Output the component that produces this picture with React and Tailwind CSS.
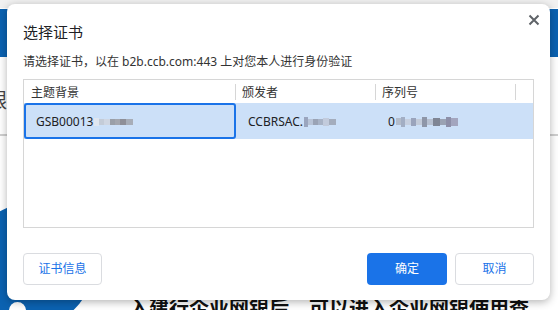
import React from "react";

const font = { fontFamily: '"Noto Sans", "Noto Sans CJK SC", sans-serif' };

// blurred bits of the serial / name, drawn as small pixel blocks
function Smudge({ blocks }) {
    return (
        <span className="inline-flex items-center ml-[1px]">
            {blocks.map((b, i) => (
                <span
                    key={i}
                    className="inline-block"
                    style={{ width: b[0], height: b[1], background: b[2] }}
                />
            ))}
        </span>
    );
}

export default function App() {
    return (
        <div className="relative w-[558px] h-[310px] overflow-hidden bg-white" style={font}>
            {/* page behind the dialog */}
            <div className="absolute inset-x-0 top-0 h-[8px] bg-[#f1f1f1]" />
            <div className="absolute inset-x-0 top-[9px] h-[48px] bg-[#0b62b1]" />
            <div className="absolute inset-x-0 top-[134px] h-[2px] bg-[#cfcfcf]" />
            <div className="absolute left-[-33px] top-[91px] text-[20px] text-[#444] leading-none">网银</div>
            <div className="absolute left-[-31px] top-[203px] w-[124px] h-[124px] rounded-full bg-[#0b62b1]" />
            <div className="absolute left-[9px] top-[302px] w-[17px] h-[17px] rounded-full bg-white" />
            <div className="absolute left-[129px] top-[299px] text-[20px] font-bold leading-none text-[#111] whitespace-nowrap">
                入建行企业网银后，可以进入企业网银使用查
            </div>

            {/* dialog */}
            <div className="absolute left-[7px] top-[4px] w-[543px] h-[296px] rounded-[8px] bg-white shadow-[0_2px_8px_rgba(0,0,0,0.3)] px-4 pt-4">
                <button className="absolute top-[10px] right-[10px] w-[12px] h-[12px] text-[#5f6368]">
                    <svg viewBox="0 0 12 12" width="12" height="12">
                        <path d="M1.5 1.5 L10.5 10.5 M10.5 1.5 L1.5 10.5" stroke="currentColor" strokeWidth="2" />
                    </svg>
                </button>

                <div className="h-[24px] leading-[24px] text-[15px] text-[#202124]">选择证书</div>
                <div className="mt-[8px] h-[20px] leading-[20px] text-[12px] text-[#333]">
                    请选择证书，以在 b2b.ccb.com:443 上对您本人进行身份验证
                </div>

                <div className="mt-[7px] w-[511px] h-[149px] border border-[#d6d6d6]">
                    <div className="flex h-[23px] items-center text-[12px] text-[#333]">
                        <div className="w-[211px] pl-[7px] pt-[3px]">主题背景</div>
                        <div className="w-[1px] h-[16px] bg-[#d6d6d6]" />
                        <div className="w-[139px] pl-[6px] pt-[3px]">颁发者</div>
                        <div className="w-[1px] h-[16px] bg-[#d6d6d6]" />
                        <div className="w-[139px] pl-[6px] pt-[3px]">序列号</div>
                        <div className="w-[1px] h-[16px] bg-[#d6d6d6]" />
                    </div>
                    <div className="flex h-[36px] bg-[#cce0f8] text-[12px] text-[#202124]">
                        <div className="w-[212px] h-[36px] border-2 border-[#1a73e8] rounded-[3px] flex items-center pl-[10px] pt-[1px]">
                            GSB00013
                            <Smudge blocks={[[5, 8, "#dfe6f0"], [5, 6, "#c4ccd8"], [6, 6, "#cfd6e2"], [5, 6, "#9a9fa8"], [5, 6, "#a3a6ae"], [6, 6, "#8e8f98"], [7, 6, "#a7adb8"]]} />
                        </div>
                        <div className="w-[140px] flex items-center pl-[12px] pt-[1px]">
                            CCBRSAC.
                            <Smudge blocks={[[4, 10, "#9aa5be"], [5, 6, "#b8c3d6"], [5, 6, "#9aa3b5"], [5, 6, "#a8b3c6"], [6, 8, "#c2cbdc"], [7, 6, "#a4adbd"]]} />
                        </div>
                        <div className="w-[140px] flex items-center pl-[12px] pt-[1px]">
                            0
                            <Smudge blocks={[[5, 7, "#b3bccb"], [4, 10, "#a2aec4"], [6, 6, "#c6cfdf"], [5, 8, "#9aa4bc"], [6, 6, "#c3cbd9"], [5, 10, "#8e96a8"], [6, 6, "#b7c0d0"], [7, 8, "#7f8594"], [6, 6, "#9aa2b3"], [5, 10, "#8d8fa8"], [7, 8, "#a3a5be"]]} />
                        </div>
                    </div>
                </div>

                <div className="mt-[25px] flex items-center text-[12px]">
                    <button className="w-[79px] h-[32px] rounded-[4px] border border-[#dadce0] text-[#1a73e8] bg-white">
                        证书信息
                    </button>
                    <div className="flex-1" />
                    <button className="w-[80px] h-[32px] rounded-[4px] bg-[#1a73e8] text-white">
                        确定
                    </button>
                    <button className="ml-[8px] w-[79px] h-[32px] rounded-[4px] border border-[#dadce0] text-[#1a73e8] bg-white">
                        取消
                    </button>
                </div>
            </div>
        </div>
    );
}
